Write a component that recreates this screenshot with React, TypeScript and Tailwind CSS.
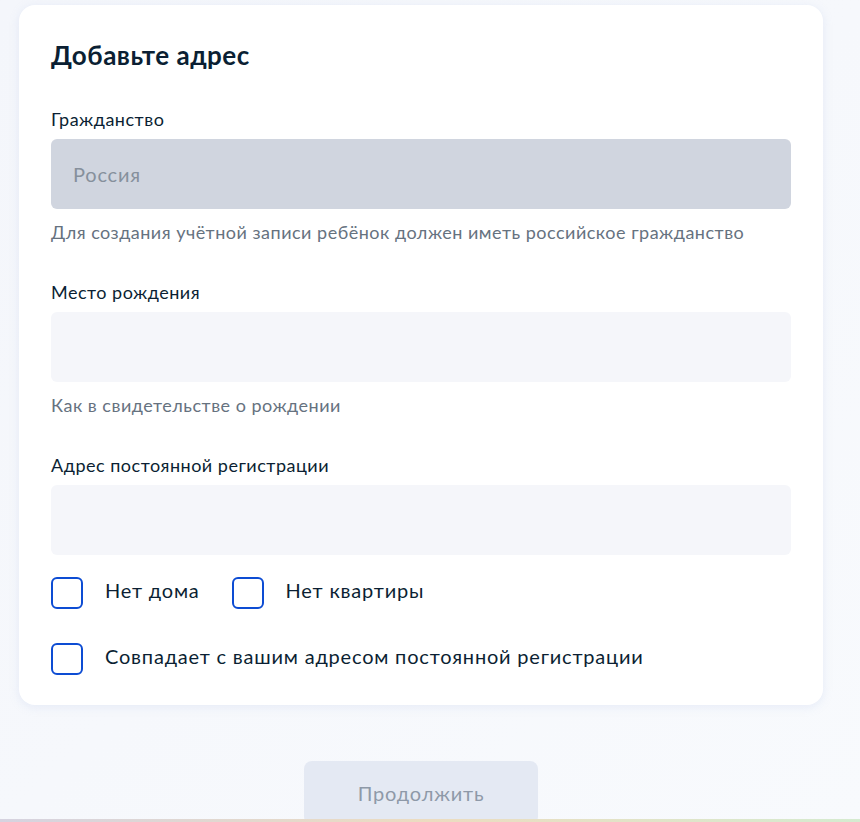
import { useState } from 'react';

type Field = {
  label: string;
  value?: string;
  hint?: string;
  disabled?: boolean;
};

const fields: Field[] = [
  {
    label: 'Гражданство',
    value: 'Россия',
    hint: 'Для создания учётной записи ребёнок должен иметь российское гражданство',
    disabled: true,
  },
  { label: 'Место рождения', hint: 'Как в свидетельстве о рождении' },
  { label: 'Адрес постоянной регистрации' },
];

function Checkbox({ label }: { label: string }) {
  const [checked, setChecked] = useState(false);
  return (
    <label className="flex items-center gap-[22px] cursor-pointer select-none">
      <span
        onClick={() => setChecked(!checked)}
        className="w-8 h-8 rounded-md border-2 border-[#0d4cd3] bg-white flex items-center justify-center"
      >
        {checked && (
          <svg width="18" height="18" viewBox="0 0 18 18" fill="none">
            <path d="M3 9l4 4 8-8" stroke="#0d4cd3" strokeWidth="2.2" strokeLinecap="round" strokeLinejoin="round" />
          </svg>
        )}
      </span>
      <span className="mb-[6px] text-[20px] leading-5 tracking-[0.8px] text-[#0b1f33]">{label}</span>
    </label>
  );
}

export default function App() {
  return (
    <div
      className="relative h-[822px] overflow-hidden bg-gradient-to-br from-[#f4f6fb] to-[#f8fafd]"
      style={{ fontFamily: 'Lato, "Noto Sans", sans-serif' }}
    >
      <div className="ml-[19px] mt-[5px] w-[804px] bg-white rounded-2xl shadow-[0_2px_10px_rgba(180,195,230,0.25)] px-8 pt-[34px] pb-[30px]">
        <h1 className="text-[26px] leading-8 font-bold tracking-[0.5px] text-[#0b1f33]">Добавьте адрес</h1>

        <div className="mt-9 flex flex-col gap-9">
          {fields.map((f) => (
            <div key={f.label}>
              <div className="text-[18px] leading-6 tracking-[0.5px] text-[#0b1f33]">{f.label}</div>
              <div
                className={
                  f.disabled
                    ? 'mt-2 h-[70px] rounded-md bg-[#d0d5df] flex items-center px-[22px] text-[20px] tracking-[0.8px] text-[#86909c]'
                    : 'mt-2 h-[70px] rounded-md bg-[#f5f6fa] flex items-center px-[22px] text-[20px] tracking-[0.8px] text-[#0b1f33]'
                }
              >
                {f.value}
              </div>
              {f.hint && (
                <div className="mt-[11px] text-[18px] leading-6 tracking-[0.5px] text-[#66727f]">{f.hint}</div>
              )}
            </div>
          ))}
        </div>

        <div className="mt-[22px] flex items-center gap-[32px]">
          <Checkbox label="Нет дома" />
          <Checkbox label="Нет квартиры" />
        </div>
        <div className="mt-[34px]">
          <Checkbox label="Совпадает с вашим адресом постоянной регистрации" />
        </div>
      </div>

      <div className="ml-[19px] w-[804px] mt-[56px] flex justify-center">
        <button className="w-[234px] h-16 rounded-lg bg-[#e4e9f3] text-[20px] tracking-[0.8px] text-[#8e99a8]">
          Продолжить
        </button>
      </div>

      <div className="absolute left-0 right-0 bottom-0 h-[3px] bg-gradient-to-r from-[#d6d3e0] via-[#ecdcc0] to-[#d5ebd0]" />
    </div>
  );
}
